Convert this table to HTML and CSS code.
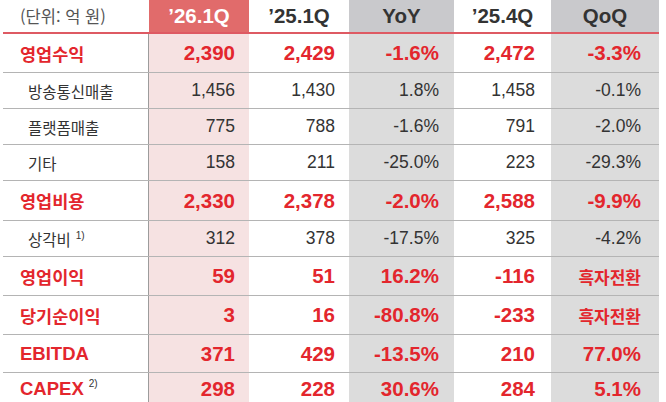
FILE: index.html
```html
<!DOCTYPE html>
<html lang="ko">
<head>
<meta charset="utf-8">
<link rel="stylesheet" href="styles.css">
</head>
<body>
<div class="tbl">
  <div class="row head">
    <div class="lbl unit">(단위: 억 원)</div>
    <div class="c hl-h">’26.1Q</div>
    <div class="c">’25.1Q</div>
    <div class="c gray-h">YoY</div>
    <div class="c">’25.4Q</div>
    <div class="c gray-h">QoQ</div>
  </div>
  <div class="row main r1">
    <div class="lbl">영업수익</div>
    <div class="c hl">2,390</div>
    <div class="c">2,429</div>
    <div class="c gray">-1.6%</div>
    <div class="c">2,472</div>
    <div class="c gray">-3.3%</div>
  </div>
  <div class="row sub">
    <div class="lbl">방송통신매출</div>
    <div class="c hl">1,456</div>
    <div class="c">1,430</div>
    <div class="c gray">1.8%</div>
    <div class="c">1,458</div>
    <div class="c gray">-0.1%</div>
  </div>
  <div class="row sub">
    <div class="lbl">플랫폼매출</div>
    <div class="c hl">775</div>
    <div class="c">788</div>
    <div class="c gray">-1.6%</div>
    <div class="c">791</div>
    <div class="c gray">-2.0%</div>
  </div>
  <div class="row sub">
    <div class="lbl">기타</div>
    <div class="c hl">158</div>
    <div class="c">211</div>
    <div class="c gray">-25.0%</div>
    <div class="c">223</div>
    <div class="c gray">-29.3%</div>
  </div>
  <div class="row main r5">
    <div class="lbl">영업비용</div>
    <div class="c hl">2,330</div>
    <div class="c">2,378</div>
    <div class="c gray">-2.0%</div>
    <div class="c">2,588</div>
    <div class="c gray">-9.9%</div>
  </div>
  <div class="row sub r6">
    <div class="lbl">상각비<sup>1)</sup></div>
    <div class="c hl">312</div>
    <div class="c">378</div>
    <div class="c gray">-17.5%</div>
    <div class="c">325</div>
    <div class="c gray">-4.2%</div>
  </div>
  <div class="row main">
    <div class="lbl">영업이익</div>
    <div class="c hl">59</div>
    <div class="c">51</div>
    <div class="c gray">16.2%</div>
    <div class="c">-116</div>
    <div class="c gray kr">흑자전환</div>
  </div>
  <div class="row main">
    <div class="lbl">당기순이익</div>
    <div class="c hl">3</div>
    <div class="c">16</div>
    <div class="c gray">-80.8%</div>
    <div class="c">-233</div>
    <div class="c gray kr">흑자전환</div>
  </div>
  <div class="row main r9">
    <div class="lbl latin">EBITDA</div>
    <div class="c hl">371</div>
    <div class="c">429</div>
    <div class="c gray">-13.5%</div>
    <div class="c">210</div>
    <div class="c gray">77.0%</div>
  </div>
  <div class="row main last">
    <div class="lbl latin">CAPEX<sup>2)</sup></div>
    <div class="c hl">298</div>
    <div class="c">228</div>
    <div class="c gray">30.6%</div>
    <div class="c">284</div>
    <div class="c gray">5.1%</div>
  </div>
</div>
</body>
</html>
```
FILE: styles.css
```css
html, body {
  margin: 0;
  padding: 0;
  background: #ffffff;
}
body {
  width: 666px;
  height: 402px;
  overflow: hidden;
  font-family: "Liberation Sans", "Noto Sans CJK KR", sans-serif;
  color: #333333;
}
.tbl {
  margin-left: 3px;
  width: 656px;
}
.row {
  display: grid;
  grid-template-columns: 146px 100px 100px 105px 97px 108px;
  border-bottom: 1px solid #b4b4b4;
  box-sizing: border-box;
}
.row.head {
  height: 34px;
  border-bottom: 2px solid #de5a63;
}
.row.main { height: 39px; }
.row.r1 { height: 39px; }
.row.r5 { height: 40px; }
.row.r6 { height: 35px; }
.row.r9 { height: 38px; }
.row.sub { height: 36px; }
.row.last { height: 32px; border-bottom: none; }

.lbl {
  display: flex;
  align-items: center;
  box-sizing: border-box;
  border-right: 1px solid #9c9c9c;
  padding-left: 17px;
  font-family: "Noto Sans CJK KR", "Liberation Sans", sans-serif;
}
.head .lbl {
  border-right: none;
  font-size: 16.5px;
  color: #555555;
  font-weight: 400;
}
.main .lbl {
  font-size: 17.5px;
  font-weight: 700;
  color: #e3262d;
}
.main .lbl.latin {
  font-family: "Liberation Sans", "Noto Sans CJK KR", sans-serif;
  font-size: 18.5px;
}
.sub .lbl {
  padding-left: 25px;
  font-size: 15.5px;
  color: #333333;
}
sup {
  font-family: "Liberation Sans", sans-serif;
  font-size: 10px;
  font-weight: 400;
  color: #333333;
  margin-left: 5px;
  position: relative;
  top: -3px;
  vertical-align: top;
  line-height: 1;
}
.main sup { top: -5px; }

.c {
  display: flex;
  align-items: center;
  justify-content: flex-end;
  box-sizing: border-box;
}
.c:nth-child(2) { padding-right: 14px; }
.c:nth-child(3) { padding-right: 14px; }
.c:nth-child(4) { padding-right: 15px; }
.c:nth-child(5) { padding-right: 16px; }
.c:nth-child(6) { padding-right: 18px; }

.head .c {
  justify-content: center;
  padding-right: 0;
  font-size: 20.5px;
  font-weight: 700;
  color: #333333;
}
.head .c.hl-h { background: #e16b6b; color: #ffffff; }
.head .c.gray-h { background: #c9c9cc; }

.main .c {
  font-size: 20.5px;
  font-weight: 700;
  color: #e3262d;
}
.sub .c {
  font-size: 17.5px;
  color: #333333;
}
.c.kr {
  font-family: "Noto Sans CJK KR", "Liberation Sans", sans-serif;
  font-size: 17px;
}
.hl { background: #f6e2e2; }
.gray { background: #dcdcdc; }
```
